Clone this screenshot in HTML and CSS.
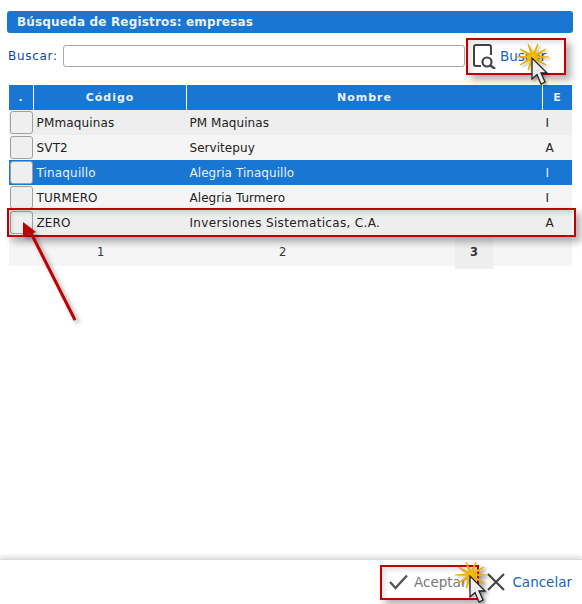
FILE: index.html
```html
<!DOCTYPE html>
<html lang="es">
<head>
<meta charset="UTF-8" />
<title>Búsqueda de Registros</title>
<link rel="stylesheet" href="styles.css">
</head>
<body>
  <div class="dialogo">
    <h1 class="titulo">Búsqueda de Registros: empresas</h1>

    <div class="buscador">
      <label class="lbl-buscar" for="buscar">Buscar:</label>
      <input type="text" id="buscar" class="caja">
      <a class="btn btn-buscar">
        <svg class="ico" width="23" height="25" viewBox="0 0 23 25">
          <path d="M8 22H3Q1 22 1 20V3Q1 1 3 1H16Q18 1 18 3V11" fill="none" stroke="#444" stroke-width="2"/>
          <circle cx="14" cy="18" r="4.500" fill="none" stroke="#444" stroke-width="2.200"/>
          <path d="M17.500 21.500L22 25" stroke="#444" stroke-width="2.400"/>
        </svg>
        <span>Buscar</span>
      </a>
    </div>

    <table class="tabla">
      <thead>
        <tr>
          <th class="c-sel">.</th>
          <th class="c-cod">Código</th>
          <th>Nombre</th>
          <th class="c-est">E</th>
        </tr>
      </thead>
      <tbody>
        <tr class="par"><td class="c-sel"><span class="sel"></span></td><td>PMmaquinas</td><td>PM Maquinas</td><td>I</td></tr>
        <tr class="impar"><td class="c-sel"><span class="sel"></span></td><td>SVT2</td><td>Servitepuy</td><td>A</td></tr>
        <tr class="activa"><td class="c-sel"><span class="sel"></span></td><td>Tinaquillo</td><td>Alegria Tinaquillo</td><td>I</td></tr>
        <tr class="impar"><td class="c-sel"><span class="sel"></span></td><td>TURMERO</td><td>Alegria Turmero</td><td>I</td></tr>
        <tr class="par"><td class="c-sel"><span class="sel"></span></td><td>ZERO</td><td class="ancho">Inversiones Sistematicas, C.A.</td><td>A</td></tr>
      </tbody>
    </table>
    <div class="paginas">
      <span class="pag pag-1">1</span>
      <span class="pag pag-2">2</span>
      <span class="pag pag-3">3</span>
    </div>

    <div class="pie">
      <a class="btn btn-aceptar">
        <svg class="ico" width="21" height="16" viewBox="0 0 21 16">
          <path d="M2 8L7.500 14L19 1.500" fill="none" stroke="#555" stroke-width="2.400"/>
        </svg>
        <span>Aceptar</span>
      </a>
      <a class="btn btn-cancelar">
        <svg class="ico" width="18" height="18" viewBox="0 0 18 18">
          <path d="M1 1L17 17M17 1L1 17" stroke="#444" stroke-width="2.200"/>
        </svg>
        <span>Cancelar</span>
      </a>
    </div>
  </div>

  <!-- marcas del tutorial, encima de la pantalla -->
  <div class="marca marca-buscar"></div>
  <div class="marca marca-fila"></div>
  <div class="marca marca-aceptar"></div>

  <svg class="flecha" width="90" height="120" viewBox="0 0 90 120">
    <path d="M69 105L25 18" stroke="#c00000" stroke-width="3"/>
    <path d="M17 7L17 22L30 17Z" fill="#c00000"/>
  </svg>

  <svg class="clic clic-buscar" width="48" height="52" viewBox="0 0 48 52">
    <defs>
      <g id="clic-forma">
        <path d="M38 17L24.900 16.100L34.900 9L23.800 14.600L26.900 4.100L22 14L17.100 4.100L20.200 14.600L9.100 9L19.100 16.100L6 17L19.100 17.900L9.100 25L20.200 19.400L17.100 29.900L22 20L26.900 29.900L23.800 19.400L34.900 25L24.900 17.900Z" fill="#f5c518" stroke="#eeb000" stroke-width="1.200"/>
        <path d="M21 18L21 39L26 34.500L30 44L34 42L30 33L36 33Z" fill="#eee" stroke="#222" stroke-width="1.300"/>
      </g>
    </defs>
    <use href="#clic-forma"/>
  </svg>
  <svg class="clic clic-aceptar" width="48" height="52" viewBox="0 0 48 52">
    <use href="#clic-forma"/>
  </svg>
</body>
</html>
```

FILE: styles.css
```css
html, body {
  margin: 0;
  height: 100%;
}
body {
  font-family: 'DejaVu Sans', Verdana, sans-serif;
  font-size: 12px;
  color: #222;
  background: #fff;
  position: relative;
  overflow: hidden;
}
.dialogo {
  height: 604px;
  display: flex;
  flex-direction: column;
  box-sizing: border-box;
  padding-top: 11px;
}
.titulo {
  margin: 0 9px 0 7px;
  height: 22px;
  line-height: 23px;
  padding-left: 10px;
  background: #1976d2;
  border-radius: 3px;
  color: #e8f2fb;
  font-size: 12px;
  font-weight: bold;
  letter-spacing: .17px;
}
.buscador {
  display: flex;
  align-items: center;
  height: 34px;
  margin-top: 6px;
  padding-left: 8px;
}
.lbl-buscar {
  width: 55px;
  color: #0d47a1;
  letter-spacing: .7px;
}
.caja {
  width: 402px;
  height: 22px;
  box-sizing: border-box;
  border: 1px solid #a9a9a9;
  border-radius: 3px;
  padding: 0 4px;
  margin: 0;
}
.btn {
  display: flex;
  align-items: center;
  color: #1565c0;
  font-size: 13.500px;
}
.btn-buscar {
  margin-left: 8px;
  gap: 4px;
}
.tabla {
  margin: 12px 0 0 9px;
  width: 563px;
  border-collapse: collapse;
  table-layout: fixed;
}
.tabla th {
  height: 25px;
  padding: 0;
  background: #1976d2;
  color: #e8f2fb;
  font-size: 11px;
  font-weight: bold;
  letter-spacing: 1px;
  border-left: 1px solid #fff;
}
.tabla th:first-child {
  border-left: 0;
}
.tabla .c-sel {
  width: 24px;
}
.tabla .c-cod {
  width: 152px;
}
.tabla .c-est {
  width: 29px;
}
.tabla td {
  height: 25px;
  padding: 0 0 0 3px;
  font-size: 12px;
  letter-spacing: .05px;
}
.tabla td:nth-child(2) {
  letter-spacing: .15px;
}
.tabla td.ancho {
  letter-spacing: .33px;
}
.tabla td.c-sel {
  padding: 0 0 0 1px;
  vertical-align: middle;
}
.par td {
  background: #eeeeee;
}
.impar td {
  background: #f5f5f5;
}
.activa td {
  background: #1976d2;
  color: #e8f2fb;
}
.sel {
  display: block;
  width: 21px;
  height: 21px;
  border: 1px solid #a0a0a0;
  border-radius: 3px;
  background: #efefef;
}
.paginas {
  display: grid;
  grid-template-columns: 178px 268px 38px 1fr;
  margin-left: 9px;
  width: 563px;
  height: 31px;
  background: #f5f5f5;
  color: #334;
  font-size: 11.500px;
  line-height: 34px;
}
.pag {
  display: block;
}
.pag-1 {
  text-indent: 88px;
}
.pag-2 {
  text-indent: 92px;
}
.pag-3 {
  grid-column: 3;
  background: #eeeeee;
  font-weight: bold;
  text-align: center;
}
.pie {
  margin-top: auto;
  height: 44px;
  border-top: 1px solid #dcdcdc;
  box-shadow: 0 -3px 4px rgba(0, 0, 0, .12);
  display: flex;
  justify-content: flex-end;
  align-items: center;
  padding-right: 10px;
  gap: 21px;
  background: #fff;
}
.btn-aceptar {
  color: #777;
  gap: 5px;
}
.btn-cancelar {
  gap: 7px;
}
.marca {
  position: absolute;
  box-sizing: border-box;
  border: 2px solid #c00000;
  box-shadow: 5px 5px 7px rgba(0, 0, 0, .3), inset 3px 3px 5px rgba(0, 0, 0, .12);
}
.marca-buscar {
  left: 466px;
  top: 38px;
  width: 100px;
  height: 37px;
}
.marca-fila {
  left: 7px;
  top: 208px;
  width: 569px;
  height: 29px;
}
.marca-aceptar {
  left: 380px;
  top: 565px;
  width: 99px;
  height: 35px;
}
.flecha {
  position: absolute;
  left: 6px;
  top: 215px;
  filter: drop-shadow(3px 3px 2px rgba(0, 0, 0, .35));
}
.clic {
  position: absolute;
  filter: drop-shadow(2px 2px 1px rgba(0, 0, 0, .25));
}
.clic-buscar {
  left: 511px;
  top: 40px;
}
.clic-aceptar {
  left: 449px;
  top: 558px;
}
```
